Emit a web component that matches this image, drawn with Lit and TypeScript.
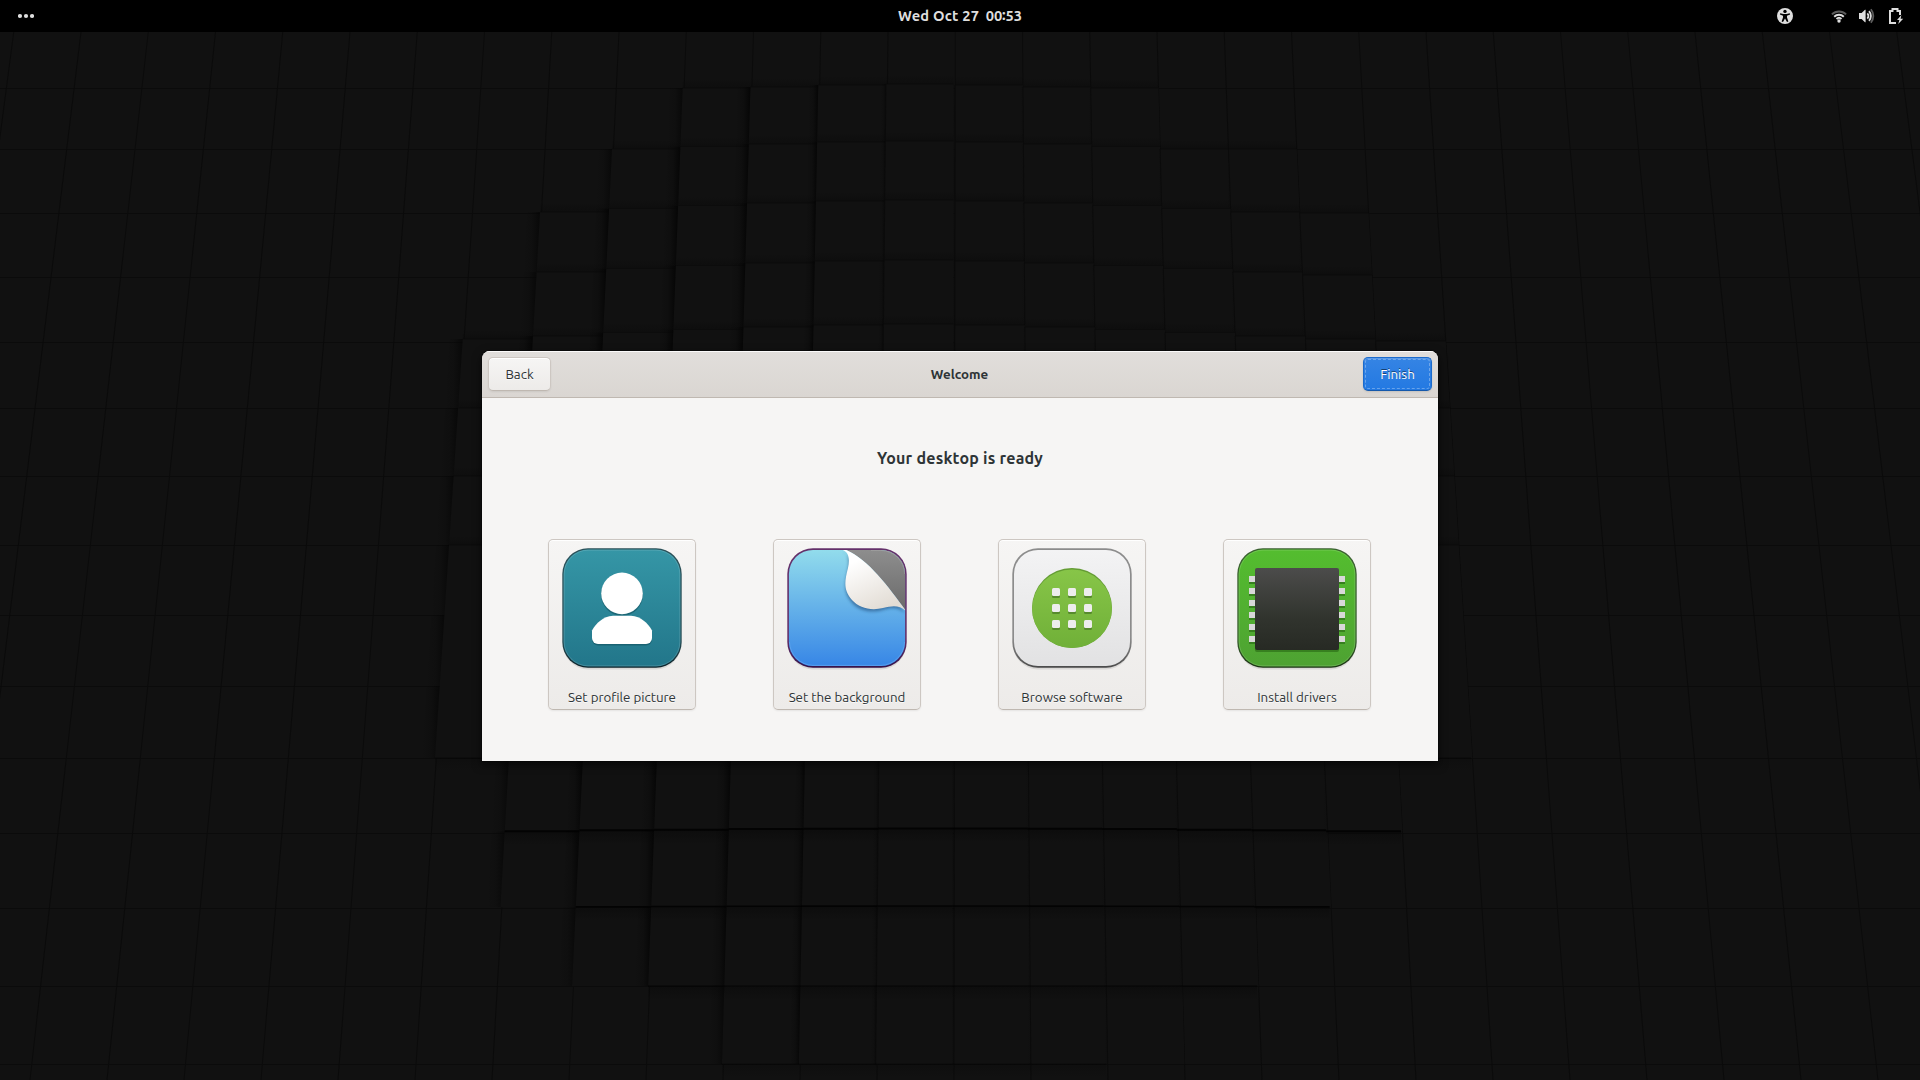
import { LitElement, html, svg, css } from "lit";
import { customElement } from "lit/decorators.js";

/* ---------- wallpaper: a perspective grid with a raised dome of tiles ---------- */

const ROWS = [27, 88, 149, 213, 277, 342, 408, 476, 545, 615, 686, 758, 833, 908, 986, 1064, 1146];
const CX = 964;
const CK = 14.13;
const spacing = (y: number) => 67.25 + (9.75 * (y - 32)) / 1048;
const gx = (k: number, y: number) => CX + (k - CK) * spacing(y);

// first and last raised column per row band (index of the band's top row)
const RAISED: Record<number, [number, number]> = {
  1: [10, 16], 2: [9, 18], 3: [8, 19], 4: [8, 19], 5: [7, 20], 6: [7, 20], 7: [7, 20],
  8: [7, 20], 9: [7, 20], 10: [7, 20], 11: [8, 19], 12: [8, 18], 13: [9, 17], 14: [11, 16],
};

// columns whose lower edge casts a dark line, per row band
const LEDGE: Record<number, [number, number, number, number]> = {
  10: [7, 20, 1, 0.5], 11: [8, 19, 2, 0.9], 12: [9, 18, 1.6, 0.85], 13: [10, 17, 1.1, 0.8], 14: [11, 15, 0.8, 0.5],
};

// upward displacement at the centre column for each row line, and its falloff per column
const RISE = [0, 4, 8, 13, 17, 18, 12, 6];
const FALLOFF = [0, 1, 3, 5.5, 8.5, 12, 15, 17];
const rise = (k: number, r: number) => Math.max(0, (RISE[r] ?? 0) - FALLOFF[Math.min(7, Math.abs(k - 13))]);

const sink = (k: number, r: number) => {
  const dx = (k - 13.5) / 7;
  return Math.max(0, 1 - dx * dx) * (r === 11 ? 4.5 : r === 12 ? 2 : 0);
};

@customElement("desktop-wallpaper")
export class DesktopWallpaper extends LitElement {
  static styles = css`
    :host { display: block; width: 1920px; height: 1080px; }
    svg { display: block; }
    .line { stroke: #0b0b0b; stroke-width: 1; fill: none; }
    .tile { fill: #111; }
  `;

  private tiles() {
    const out: unknown[] = [];
    for (const key of Object.keys(RAISED)) {
      const r = Number(key);
      const [a, b] = RAISED[r];
      for (let k = a; k <= b; k++) {
        const y0 = ROWS[r] - (r > 7 ? sink(k, r - 1) : rise(k, r));
        const y1 = ROWS[r + 1] - (r > 6 ? sink(k, r) : rise(k, r + 1));
        const push = k < 14 ? 1.5 : 0;
        const xa = gx(k, y0) - push;
        const xb = gx(k + 1, y0) - push;
        const xc = gx(k + 1, y1) - push;
        const xd = gx(k, y1) - push;
        out.push(svg`<polygon class="tile" points="${xa},${y0} ${xb},${y0} ${xc},${y1} ${xd},${y1}"></polygon>`);
        if (r < 9) {
          out.push(svg`<polygon fill="url(#topShade)" opacity="0.45"
            points="${xa},${y0 - 9} ${xb},${y0 - 9} ${xb},${y0} ${xa},${y0}"></polygon>`);
          out.push(svg`<path d="M${xa} ${y0}H${xb}" stroke="#0b0b0b" stroke-width="0.8" opacity=".8"></path>`);
        }
        const s = (k <= 12 ? 1 : k === 13 ? 0.6 : 0.1) * (k === a ? 0.75 : 1);
        const w = k <= 11 ? 13 : k === 12 ? 9 : 5;
        out.push(svg`<polygon fill="url(#sideShade)" opacity=${s}
          points="${xa - w},${y0} ${xa},${y0} ${xd},${y1} ${xd - w},${y1}"></polygon>`);
        if (k >= 13) out.push(svg`<path d="M${xa} ${y0}L${xd} ${y1}" stroke="#0b0b0b" opacity=".8"></path>`);
      }
    }
    for (const key of Object.keys(LEDGE)) {
      const r = Number(key);
      const [a, b, width, opacity] = LEDGE[r];
      for (let k = a; k <= b; k++) {
        const y = ROWS[r + 1] - sink(k, r);
        const x0 = gx(k, y) - 1.5;
        const x1 = gx(k + 1, y) - 1.5;
        out.push(svg`<polygon fill="url(#lowShade)" opacity=${opacity}
          points="${x0},${y} ${x1},${y} ${x1},${y + 14} ${x0},${y + 14}"></polygon>`);
        out.push(svg`<path d="M${x0} ${y}H${x1}" stroke="#020202" stroke-width=${width} opacity=${opacity}></path>`);
      }
    }
    return out;
  }

  render() {
    const cols = Array.from({ length: 32 }, (_, i) => i - 1);
    return html`<svg width="1920" height="1080" viewBox="0 0 1920 1080">
      <defs>
        <linearGradient id="sideShade">
          <stop offset="0" stop-color="#060606" stop-opacity="0"></stop>
          <stop offset=".5" stop-color="#060606" stop-opacity=".22"></stop>
          <stop offset="1" stop-color="#040404" stop-opacity=".9"></stop>
        </linearGradient>
        <linearGradient id="topShade" x2="0" y2="1"><stop offset="0" stop-color="#080808" stop-opacity="0"></stop><stop offset="1" stop-color="#080808" stop-opacity=".8"></stop></linearGradient>
        <linearGradient id="lowShade" x2="0" y2="1"><stop offset="0" stop-color="#060606" stop-opacity=".45"></stop><stop offset="1" stop-color="#060606" stop-opacity="0"></stop></linearGradient>
      </defs>
      <rect width="1920" height="1080" fill="#111"></rect>
      ${ROWS.map((y) => svg`<path class="line" d="M0 ${y}.5H1920"></path>`)}
      ${cols.map((k) => svg`<path class="line" d="M${gx(k, 32)} 32L${gx(k, 1080)} 1080"></path>`)}
      ${this.tiles()}
    </svg>`;
  }
}

/* ---------- top bar ---------- */

@customElement("top-bar")
export class TopBar extends LitElement {
  static styles = css`
    :host {
      display: grid; grid-template-columns: 1fr auto 1fr; align-items: center;
      height: 32px; background: #000; color: #dedede;
      font: 700 14.67px/32px Ubuntu, "Noto Sans", sans-serif;
    }
    svg { display: block; }
    .activities { padding-left: 18px; }
    .clock { display: flex; gap: 6.5px; }
    .date { letter-spacing: 0.2px; }
    .time { letter-spacing: -0.1px; }
    .colon { position: relative; top: -1px; }
    .status { display: flex; justify-content: flex-end; padding-right: 16px; }
    .a11y { margin-right: 38px; }
    .wifi { margin-right: 12px; }
    .sound { margin-right: 14px; }
  `;
  render() {
    return html`
      <div class="activities">
        <svg width="16" height="6" viewBox="0 0 16 6" fill="#dedede"><circle cx="2" cy="3" r="2.1"></circle><circle cx="8" cy="3" r="2.1"></circle><circle cx="14" cy="3" r="2.1"></circle></svg>
      </div>
      <div class="clock"><span class="date">Wed Oct 27</span><span class="time">00<span class="colon">:</span>53</span></div>
      <div class="status">
        <svg class="a11y" width="16" height="16" viewBox="0 0 16 16">
          <circle cx="8" cy="8" r="8" fill="#dedede"></circle>
          <circle cx="8" cy="3.4" r="1.7" fill="#000"></circle>
          <path d="M3.2 5.2 6.4 6.1H9.6L12.8 5.2 13.1 6.6 10 7.8V9.6L11.4 13.4 10 14 8 10.4 6 14 4.6 13.4 6 9.6V7.8L2.9 6.6Z" fill="#000"></path>
        </svg>
        <svg class="wifi" width="16" height="16" viewBox="0 0 16 16" fill="none" stroke="#dedede" stroke-width="1.9">
          <path d="M.9 6.4A10.2 10.2 0 0 1 15.1 6.4" stroke="#5c5c5c"></path>
          <path d="M3.2 8.7A6.9 6.9 0 0 1 12.8 8.7"></path>
          <path d="M5.5 11A3.6 3.6 0 0 1 10.5 11"></path>
          <circle cx="8" cy="13" r="1.7" fill="#dedede" stroke="none"></circle>
        </svg>
        <svg class="sound" width="16" height="16" viewBox="0 0 16 16" fill="none" stroke="#dedede" stroke-width="1.8">
          <path d="M0 5H2.6L6 1.8H6.6V14.2H6L2.6 11H0Z" fill="#dedede" stroke="none"></path>
          <path d="M8.3 5.4A3.6 3.6 0 0 1 8.3 10.6"></path>
          <path d="M10 3.2A7 7 0 0 1 10 12.8"></path>
          <path d="M11.9 1.3A10.5 10.5 0 0 1 11.9 14.7" stroke="#5c5c5c"></path>
        </svg>
        <svg width="15" height="16" viewBox="0 0 15 16">
          <path d="M7 15H1V3H3.5V1H8.5V3H11V7" fill="none" stroke="#dedede" stroke-width="2"></path>
          <path d="M12.4 7 8 12H10.4L9.2 16 14.2 10.8H11.6Z" fill="#dedede"></path>
        </svg>
      </div>`;
  }
}

/* ---------- application icons (120px tile with a faint drop shadow) ---------- */

const frame = (id: string, top: string, bottom: string, edgeTop: string, edgeBottom: string, edge: number) => svg`
  <defs>
    <linearGradient id="${id}f" x2="0" y2="1"><stop offset="0" stop-color=${top}></stop><stop offset="1" stop-color=${bottom}></stop></linearGradient>
    <linearGradient id="${id}e" x2="0" y2="1"><stop offset="0" stop-color=${edgeTop}></stop><stop offset=".75" stop-color=${edgeTop}></stop><stop offset="1" stop-color=${edgeBottom}></stop></linearGradient>
  </defs>
  <rect x="1" y="3" width="118" height="118.4" rx="25" fill="#000" opacity=".09"></rect>
  <rect x=".3" y=".3" width="119.4" height="119.4" rx="25.7" fill="url(#${id}e)"></rect>
  <rect x=${edge} y=${edge} width=${120 - 2 * edge} height=${120 - 2 * edge} rx=${26 - edge} fill="url(#${id}f)"></rect>`;

const rim = svg`<rect x="2.2" y="2.2" width="115.6" height="115.6" rx="23.8" fill="none" stroke="#fff" stroke-opacity=".14"></rect>`;

const profileIcon = svg`
  ${frame("p", "#3596a6", "#22768a", "#2b5058", "#0c2229", 1.6)}${rim}
  <g fill="#0c4450" opacity=".45" transform="translate(0 1.4)">
    <circle cx="60" cy="45.4" r="21"></circle>
    <path d="M51 67.700H69C79 68.500 86 75 90 82.500V90a6 6 0 0 1-6 6H36a6 6 0 0 1-6-6V82.500C34 75 41 68.500 51 67.700Z"></path>
  </g>
  <g fill="#fff">
    <circle cx="60" cy="45.4" r="20.8"></circle>
    <path d="M51 67.700H69C79 68.500 86 75 90 82.500V90a6 6 0 0 1-6 6H36a6 6 0 0 1-6-6V82.500C34 75 41 68.500 51 67.700Z"></path>
  </g>`;

const backgroundIcon = svg`
  ${frame("b", "#92dcec", "#3786e6", "#64306a", "#35124a", 1.9)}
  <defs>
    <clipPath id="bc"><rect x="1.9" y="1.9" width="116.2" height="116.2" rx="24.1"></rect></clipPath>
    <linearGradient id="bg" x2="0" y2="1"><stop offset="0" stop-color="#8e8e8e"></stop><stop offset="1" stop-color="#6a6a6a"></stop></linearGradient>
    <linearGradient id="bp" x1=".1" y1="0" x2=".6" y2="1"><stop offset=".2" stop-color="#fff"></stop><stop offset="1" stop-color="#e2dcd4"></stop></linearGradient>
    <filter id="bs" x="-20%" y="-20%" width="140%" height="140%"><feGaussianBlur stdDeviation="1.6"></feGaussianBlur></filter>
  </defs>
  <g clip-path="url(#bc)">
    <path d="M56 1.500C62 4 62.500 12 60.500 21C57 35 57 44 65 53C72 61 84 63.500 96 60C106 57 111 57.500 118.500 63L90 30Z" transform="translate(0 2)" fill="#123c6c" opacity=".5" filter="url(#bs)"></path>
    <path d="M58 1.500C80 10 101 38 119 63V1Z" fill="url(#bg)"></path>
    <path d="M84 2.400H94A24 24 0 0 1 117.600 26" fill="none" stroke="#fff" stroke-opacity=".15"></path>
    <path d="M54 1.500C62 3 63 11 61 20C57 35 57 43 65 52C72 60 84 63 96 60C106 57.500 112 57 119 63C101 38 80 10 58 1.500Z" fill="url(#bp)"></path>
    <path d="M2.500 94A24 24 0 0 0 26 117.400H94A24 24 0 0 0 117.500 94" fill="none" stroke="#6caef2" stroke-opacity=".6"></path>
  </g>`;

const softwareIcon = svg`
  ${frame("s", "#f3f3f4", "#e2e2e3", "#8c8c8c", "#4a4a4a", 2)}
  <defs><linearGradient id="sc" x2="0" y2="1"><stop offset="0" stop-color="#87c548"></stop><stop offset="1" stop-color="#70b038"></stop></linearGradient></defs>
  <circle cx="60" cy="60" r="40" fill="#649c34"></circle>
  <ellipse cx="60" cy="60.700" rx="39.900" ry="39.300" fill="url(#sc)"></ellipse>
  ${[40, 56, 72].map((y) => [40, 56, 72].map((x) => svg`
    <rect x=${x} y=${y + 2} width="8" height="8" rx="1.500" fill="#578b2d"></rect>
    <rect x=${x} y=${y} width="8" height="8" rx="1.500" fill="#ededed"></rect>`))}`;

const driversIcon = svg`
  ${frame("d", "#54bd2f", "#4ea232", "#3b6031", "#1a3212", 1.6)}${rim}
  <defs><linearGradient id="dc" x2="0" y2="1"><stop offset="0" stop-color="#4c4c4b"></stop><stop offset=".6" stop-color="#31342e"></stop><stop offset="1" stop-color="#272a24"></stop></linearGradient></defs>
  ${[28, 40, 52, 64, 76, 88].map((y) => [12, 102].map((x) => svg`
    <rect x=${x} y=${y + 2} width="6" height="6" fill="#37801f"></rect>
    <rect x=${x} y=${y} width="6" height="6" fill="#d8d8d8"></rect>`))}
  <rect x="18" y="22" width="84" height="82" rx="2" fill="#37801f"></rect>
  <rect x="18" y="20" width="84" height="82" rx="2" fill="url(#dc)"></rect>`;

const ACTIONS = [
  { label: "Set profile picture", icon: profileIcon },
  { label: "Set the background", icon: backgroundIcon },
  { label: "Browse software", icon: softwareIcon },
  { label: "Install drivers", icon: driversIcon },
];

/* ---------- welcome window ---------- */

@customElement("welcome-window")
export class WelcomeWindow extends LitElement {
  static styles = css`
    :host {
      display: flex; flex-direction: column; width: 956px; height: 410px;
      border-radius: 8px 8px 0 0; overflow: hidden; background: #f6f5f4; color: #2e3436;
      box-shadow: 0 3px 9px 1px rgba(0, 0, 0, 0.5), 0 0 0 1px rgba(0, 0, 0, 0.23);
      font: 13.333px/18px Ubuntu, "Noto Sans", sans-serif;
    }
    .header {
      display: grid; grid-template-columns: 1fr auto 1fr; align-items: center; flex: none;
      box-sizing: border-box; height: 47px; padding: 0 6px;
      background: linear-gradient(#e1dedb, #dad6d2); border-bottom: 1px solid #bfb8b1;
      box-shadow: inset 0 1px #fbfafa;
    }
    .title { font-weight: 700; padding: 2px 1px 0 0; }
    button {
      box-sizing: border-box; margin: 0; padding: 2px 0 0; font: inherit; color: inherit;
      border: 1px solid #cdc7c2; border-bottom-color: #bfb8b1; border-radius: 5px;
      background: linear-gradient(#f6f5f4, #edebe9);
      box-shadow: inset 0 1px #fff, 0 1px 2px rgba(0, 0, 0, 0.07);
      text-shadow: 0 1px rgba(255, 255, 255, 0.77);
    }
    .back { width: 63px; height: 34px; }
    .finish {
      justify-self: end; width: 69px; height: 34px; color: #fff;
      border-color: #1b6acb; border-bottom-color: #1558ab;
      background: linear-gradient(#3584e4, #2379e2);
      box-shadow: inset 0 1px rgba(255, 255, 255, 0.2), 0 1px 2px rgba(0, 0, 0, 0.1);
      text-shadow: 0 -1px rgba(0, 0, 0, 0.5);
      outline: 1px dashed rgba(255, 255, 255, 0.3); outline-offset: -3px;
    }
    .heading {
      margin: 49px 0 0; font-size: 16px; line-height: 22px; font-weight: 700;
      letter-spacing: 0.22px; text-align: center;
    }
    .actions { display: flex; gap: 77px; padding: 70px 0 0 66px; }
    .card {
      display: flex; flex-direction: column; align-items: center; justify-content: space-between;
      width: 148px; height: 171px; padding: 8px 0 2px;
    }
    .card svg { display: block; }
  `;
  render() {
    return html`
      <div class="header">
        <button class="back">Back</button>
        <span class="title">Welcome</span>
        <button class="finish">Finish</button>
      </div>
      <h1 class="heading">Your desktop is ready</h1>
      <div class="actions">
        ${ACTIONS.map((a) => html`<button class="card">
          <svg width="120" height="124" viewBox="0 0 120 124">${a.icon}</svg>
          <span>${a.label}</span>
        </button>`)}
      </div>`;
  }
}

@customElement("app-root")
export class AppRoot extends LitElement {
  static styles = css`
    :host { display: grid; width: 1920px; height: 1080px; overflow: hidden; background: #111; }
    desktop-wallpaper, .desktop { grid-area: 1 / 1; }
    .desktop { display: flex; flex-direction: column; z-index: 1; }
    .workspace { display: flex; justify-content: center; padding-top: 319px; }
  `;
  render() {
    return html`
      <desktop-wallpaper></desktop-wallpaper>
      <div class="desktop">
        <top-bar></top-bar>
        <div class="workspace"><welcome-window></welcome-window></div>
      </div>`;
  }
}
